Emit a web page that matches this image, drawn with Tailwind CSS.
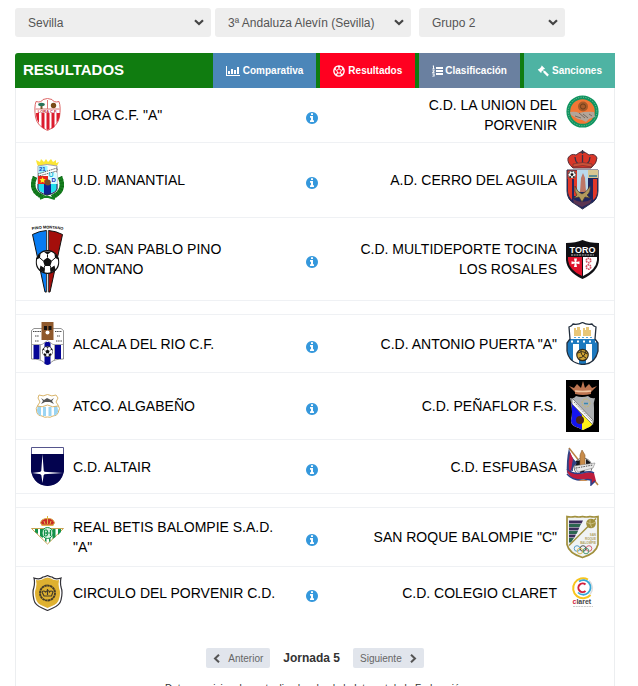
<!DOCTYPE html>
<html lang="es">

<head>
  <meta charset="UTF-8" />
  <meta name="viewport" content="width=device-width, initial-scale=1" />
  <title>Resultados - 3ª Andaluza Alevín</title>
  <script src="https://cdn.jsdelivr.net/npm/@tailwindcss/browser@4"></script>
</head>

<body class="bg-white pt-2 pl-[15px] pr-[23px] font-['Liberation_Sans',Arial,sans-serif] text-black">

  <!-- Shared icons -->
  <svg class="hidden">
    <symbol id="info" viewBox="0 128 1536 1536">
      <path d="M1024 1376v-160q0-14-9-23t-23-9h-96v-512q0-14-9-23t-23-9h-320q-14 0-23 9t-9 23v160q0 14 9 23t23 9h96v320h-96q-14 0-23 9t-9 23v160q0 14 9 23t23 9h448q14 0 23-9t9-23zm-128-896v-160q0-14-9-23t-23-9h-192q-14 0-23 9t-9 23v160q0 14 9 23t23 9h192q14 0 23-9t9-23zm640 416q0 209-103 385.5t-279.5 279.5-385.5 103-385.5-103-279.5-279.5-103-385.5 103-385.5 279.5-279.5 385.5-103 385.5 103 279.5 279.5 103 385.5z" />
    </symbol>
    <symbol id="down" viewBox="0 0 10 7">
      <path d="M1 1.300 5 5 9 1.300" fill="none" stroke="#444" stroke-width="2.200" />
    </symbol>
    <symbol id="ball" viewBox="0 0 24 24">
      <circle cx="12" cy="12" r="11.300" fill="#fff" stroke="#111" stroke-width="1.200" />
      <path d="m12 7.500 4.500 3.200-1.700 5.300H9.200l-1.700-5.300zM8 1.500h8L12 4.500zM.8 9.500 4.500 8 5 3.500 1.800 7zM23.200 9.500 19.500 8 19 3.500l3.200 3.500zM4 20l1-4.500 4.500 3-.5 4zM20 20l-1-4.500-4.500 3 .5 4z" fill="#111" />
      <path d="M12 7.500V4.500M16.500 10.700l3-2.700M14.800 16l1 3M9.200 16l-1 3M7.500 10.700 4.500 8" stroke="#111" />
    </symbol>
  </svg>

  <!-- Filters -->
  <form class="flex text-xs text-[#555]">
    <div class="relative mr-1 w-[196px]">
      <select aria-label="Provincia" class="h-[29px] w-full appearance-none rounded-[3px] bg-[#eee] px-[13px]">
        <option>Sevilla</option>
      </select>
      <svg class="pointer-events-none absolute top-[11px] right-[7px] h-[7px] w-[10px]"><use href="#down" /></svg>
    </div>
    <div class="relative mr-2 w-[196px]">
      <select aria-label="Competición" class="h-[29px] w-full appearance-none rounded-[3px] bg-[#eee] px-[13px]">
        <option>3ª Andaluza Alevín (Sevilla)</option>
      </select>
      <svg class="pointer-events-none absolute top-[11px] right-[7px] h-[7px] w-[10px]"><use href="#down" /></svg>
    </div>
    <div class="relative w-[146px]">
      <select aria-label="Grupo" class="h-[29px] w-full appearance-none rounded-[3px] bg-[#eee] px-[13px]">
        <option>Grupo 2</option>
      </select>
      <svg class="pointer-events-none absolute top-[11px] right-[7px] h-[7px] w-[10px]"><use href="#down" /></svg>
    </div>
  </form>

  <main class="mt-4">
    <!-- Panel header -->
    <header class="flex h-[35px] items-stretch rounded-tl-[3px] bg-[#107c10] text-white">
      <h1 class="flex-1 pl-2 text-[15px] leading-[34px] font-bold">RESULTADOS</h1>
      <nav class="flex gap-1 text-[10px] leading-[37px] font-bold">
        <a href="#" class="flex items-center gap-[3px] bg-[#4b86b9] px-[13px]">
          <svg class="h-[12px] w-[14px]" viewBox="0 0 14 12" fill="#fff"><path d="M0 1h1v9h13v1H0zM2 6h2v3H2zM5 4h2v5H5zM8 5h2v4H8zM11 2h2v7h-2z" /></svg>
          Comparativa
        </a>
        <a href="#" class="flex items-center gap-[3px] bg-[#ff0020] px-[13px]">
          <svg class="h-[12px] w-[12px]" viewBox="0 0 24 24" fill="none" stroke="#fff">
            <circle cx="12" cy="12" r="10.300" stroke-width="2.800" />
            <path d="m12 7.500 4.500 3.200-1.700 5.300H9.200l-1.700-5.300z" stroke-width="2" />
            <path d="M12 7.500V4M16.500 10.700 20 9M14.800 16l2.500 3M9.200 16l-2.500 3M7.500 10.700 4 9" stroke-width="2" />
            <path d="M8 2h8l-4 4zM1.500 10 6 9 5 4.500zM22.500 10 18 9l1-4.500zM5 20l1-4 4 5zM19 20l-1-4-4 5z" fill="#fff" stroke="none" />
          </svg>
          Resultados
        </a>
        <a href="#" class="flex items-center gap-[2px] bg-[#6a80a0] px-[13px]">
          <svg class="h-[12px] w-[11px]" viewBox="0 0 11 12" fill="#fff"><path d="M4 2h7v2H4zM4 5h7v2H4zM4 8h7v2H4zM1 .5h1v3h.7v.7H.4v-.7H1V1.300H.4zM.3 4.800h2.200v1.500L1.300 7.300h1.300V8H.2v-.8l1.300-1.100v-.6H.3zM.3 8.600h2.300v3H.2v-.7h1.500v-.5H.7v-.6h1v-.5H.3z" /></svg>
          Clasificación
        </a>
        <a href="#" class="flex items-center gap-[3px] bg-[#4eb3a3] px-[13px]">
          <svg class="h-[12px] w-[12px]" viewBox="0 0 12 12" fill="#fff"><path d="M4.800.5 8 3.700l-.6.600-.4-.2-1 1 .9.900 1-.2 4 4-1.500 1.700-4-4 .1-1-.9-.9-1.200 1.200.2.500-.6.600L.8 4.700l.6-.6.500.2L4.400 1.700l-.2-.5z" /></svg>
          Sanciones
        </a>
      </nav>
    </header>

    <section class="border-x border-[#eceef0] pb-4">
      <table class="w-full table-fixed border-collapse text-sm leading-5">
        <colgroup>
          <col class="w-[57px]" />
          <col class="w-[35%]" />
          <col class="w-[60px]" />
          <col />
          <col class="w-[57px]" />
        </colgroup>
        <tbody>
          <tr class="border-b border-[#eff1f4]">
            <td class="py-[7px] pl-[15px]">
              <svg class="h-[34px] w-[33px]" viewBox="0 0 33 34">
                <path d="M5 3.500Q10 5 12 1.500q4.500-2 9 0Q23 5 28 3.500 30 9 28.500 19 27 28 16.500 32.500 6 28 4.500 19 3 9 5 3.500z" fill="#fff" stroke="#d66" />
                <path d="M5 15h3v10q-3-4-3-10zM10.500 15h3v16l-3-2zM15.500 15h3v16l-2 1-1-1zM20.500 15h3v14l-3 2zM25.500 15H29q-.5 7-3.500 10z" fill="#dc1c2e" />
                <path d="M16.500 2v9M4.500 11h24" stroke="#d77" />
                <path d="M9.500 7h2v4h-2z" fill="#765b2e" /><ellipse cx="10.500" cy="6.500" rx="3.300" ry="1.700" fill="#26735a" />
                <circle cx="22.500" cy="7.500" r="2.700" fill="#7a4b18" />
                <text x="16.500" y="15" font-size="4" font-weight="bold" text-anchor="middle" fill="#c4283a">LORA C.F.</text>
              </svg>
            </td>
            <td>LORA C.F. "A"</td>
            <td class="pt-[6px]"><a href="#" aria-label="Detalle" class="block"><svg class="mx-auto h-[12px] w-[12px] text-[#3598dc]" fill="currentColor"><use href="#info" /></svg></a></td>
            <td class="pl-3 text-right">C.D. LA UNION DEL PORVENIR</td>
            <td class="py-[7px] pl-[9px]">
              <svg class="h-[40px] w-[33px]" viewBox="0 0 33 40">
                <circle cx="16.500" cy="16.500" r="14.200" fill="#f37735" stroke="#109460" stroke-width="3.800" />
                <circle cx="16.500" cy="16.500" r="14.300" fill="none" stroke="#7dc4a4" stroke-width="1" stroke-dasharray="1 1.500" />
                <circle cx="17" cy="11.500" r="5" fill="#a95a28" /><circle cx="17" cy="11.500" r="2.600" fill="none" stroke="#6e3e1d" />
                <path d="M4 17q6-1 9 1 7-2 15-1l1 5-6 2-3 3-4-2-4-1-7-4z" fill="#b3a599" />
                <path d="m13 18 6 5M17 19l5 4M9 21l6 2M23 19l3 2" stroke="#77695f" />
              </svg>
            </td>
          </tr>
          <tr class="border-b border-[#eff1f4]">
            <td class="py-[7px] pl-[15px]">
              <svg class="h-[42px] w-[33px]" viewBox="0 0 33 42">
                <path d="M4 18q-6 14 8 20M29 18q6 14-8 20" fill="none" stroke="#16801f" stroke-width="4.500" />
                <path d="M4 18q-6 14 8 20M29 18q6 14-8 20" fill="none" stroke="#0b5c14" stroke-width="4.500" stroke-dasharray=".6 2.400" />
                <path d="m9 40 7-3 8 3M10 36l13 4" stroke="#16801f" stroke-width="1.500" fill="none" />
                <path d="M6 5 5 1l4 2 1-3 3 3 2-3 2 3 3-3 2 3 3-2 0 3 3-1-2 4q-10-3-19 0z" fill="#fbe535" />
                <path d="M7 7q9-3 19 0v23q-1 4-10 6-8-2-9-6z" fill="#fff" stroke="#889" stroke-width=".8" />
                <path d="M7.500 7h9v6l-9 4z" fill="#9ff4ff" /><path d="M7 17h10v8H7z" fill="#e6231a" /><path d="M17 14h9v11h-9z" fill="#d8fbff" />
                <path d="M7 25h6v9q-6-2-6-5zM20 25h6v4q0 3-6 5z" fill="#23dfee" /><path d="M13 25h7v10l-4 1-3-1z" fill="#102191" />
                <path d="M7 25v5q1 4 9 6 9-2 10-6v-5" fill="none" stroke="#222a55" />
                <path d="M7 15 26 9v3L8 17z" fill="#fff" stroke="#333" stroke-width=".8" stroke-dasharray="1.500 .8" />
                <path d="m11.500 18 1 2 2.200.2-1.700 1.500.6 2.300-2.100-1.200-2 1.200.5-2.300-1.600-1.500 2.200-.2z" fill="#ffee20" />
                <circle cx="16.800" cy="23.500" r="3" fill="#7a4b26" />
                <text x="8" y="12" font-size="6" font-weight="bold" fill="#1537bd">21</text>
                <text x="17.500" y="18" font-size="7" font-weight="bold" fill="#27b9dd">U</text>
                <text x="20.500" y="23" font-size="6" font-weight="bold" fill="#142dba">D</text>
              </svg>
            </td>
            <td>U.D. MANANTIAL</td>
            <td class="pt-[6px]"><a href="#" aria-label="Detalle" class="block"><svg class="mx-auto h-[12px] w-[12px] text-[#3598dc]" fill="currentColor"><use href="#info" /></svg></a></td>
            <td class="pl-3 text-right">A.D. CERRO DEL AGUILA</td>
            <td class="py-[7px] pl-[9px]">
              <svg class="h-[60px] w-[33px]" viewBox="0 0 33 60">
                <path d="M7 18Q1 13 2 8q3-5 8-3 3-3 6-3 4 0 7 3 6-2 8 3 0 5-6 10z" fill="#d93628" stroke="#57303a" />
                <path d="M16.500 0v4M14.500 2h4M16.500 5v8M9 7q0 4 3 7M24 7q0 4-3 7" stroke="#3b3245" stroke-width="1.300" fill="none" />
                <path d="M7 14q10-3 19 0v3q-9-3-19 0z" fill="#c9523a" stroke="#6c2b2b" stroke-width=".6" />
                <path d="M1 20h31v21q0 9-8 13l-7.500 5L9 54Q1 50 1 41z" fill="#20265f" stroke="#2d304e" />
                <path d="M2 29h4v21q-4-4-4-9zM27 29h4v13q0 5-4 8zM8 29h3v17H8z" fill="#e23728" />
                <path d="M1.500 20.500H11V29H1.500z" fill="#d83a2a" /><svg x="2" y="20.500" width="8" height="8"><use href="#ball" /></svg>
                <path d="M11 20h11v22H11z" fill="#b9d9ec" /><path d="M22 20h10v8H22z" fill="#d8c792" /><path d="M23 25h8v2h-8z" fill="#5b8c93" />
                <path d="m14 42 1-14 2-5 2 5 1 14z" fill="#bd7665" />
                <path d="M9 36q2 6 7 8 5-2 8-8 1 6-3 9l3 3-5-1-3 5-3-5-5 1 3-3q-3-3-2-9z" fill="#b39a5c" stroke="#493e30" stroke-width=".7" />
                <path d="M7 49q9 6 19 0l-2 4-8 4-8-4z" fill="#5b3551" />
              </svg>
            </td>
          </tr>
          <tr class="border-b border-[#eff1f4]">
            <td class="py-[7px] pl-[15px]">
              <svg class="h-[68px] w-[33px]" viewBox="0 0 33 68">
                <path id="arc" d="M1 5q15.500-3 31 0" fill="none" />
                <text font-size="4" font-weight="bold" fill="#000"><textPath href="#arc">PINO MONTANO</textPath></text>
                <path d="M1.500 9.500Q8 6 15.500 5.500V67H14z" fill="#087cf2" stroke="#111" />
                <path d="M31.500 9.500Q25 6 17.500 5.500V67H19z" fill="#a40e0b" stroke="#111" />
                <path d="M16.500 5.500V67" stroke="#ddd" stroke-width="1.500" />
                <svg x="4.500" y="25" width="24" height="24"><use href="#ball" /></svg>
              </svg>
            </td>
            <td>C.D. SAN PABLO PINO MONTANO</td>
            <td class="pt-[6px]"><a href="#" aria-label="Detalle" class="block"><svg class="mx-auto h-[12px] w-[12px] text-[#3598dc]" fill="currentColor"><use href="#info" /></svg></a></td>
            <td class="pl-3 text-right">C.D. MULTIDEPORTE TOCINA LOS ROSALES</td>
            <td class="py-[7px] pl-[9px]">
              <svg class="h-[39px] w-[33px]" viewBox="0 0 33 39">
                <path d="M0 3q10 0 16.500-3Q23 3 33 3v17q-1 12-16.500 19Q1 32 0 20z" fill="#101014" />
                <path d="M2 17h14v19Q3 30 2 20z" fill="#e0112b" /><path d="M17 17h14v3q-1 10-14 16z" fill="#fff" />
                <path d="M8 18.500h3L10.300 22l3.200-.7v3l-3.200-.7.700 3.500H8l.7-3.500-3.200.7v-3l3.200.7z" fill="#fff" />
                <circle cx="22.500" cy="20.500" r="2.200" fill="none" stroke="#d65566" stroke-width="1.700" stroke-dasharray="1.500 .6" />
                <circle cx="22.500" cy="27" r="2.200" fill="none" stroke="#d65566" stroke-width="1.700" stroke-dasharray="1.500 .6" />
                <text x="16.500" y="13" font-size="9" font-weight="bold" text-anchor="middle" fill="#fff">TORO</text>
                <path d="M5 15h23" stroke="#bbb" stroke-dasharray="2 .7" />
              </svg>
            </td>
          </tr>
          <tr class="h-[14px] border-b border-[#eff1f4]"><td colspan="5"></td></tr>
          <tr class="border-b border-[#eff1f4]">
            <td class="py-[7px] pl-[15px]">
              <svg class="h-[43px] w-[33px]" viewBox="0 0 33 43">
                <path d="M.5 8.500 3 6.500h27l2.500 2V37q-9 0-12 3l-4 3-4-3Q9.500 37 .5 37z" fill="#fff" stroke="#777" stroke-width=".8" />
                <path d="M10.500 0h12v18h-12z" fill="#8f592c" /><path d="M13 4h3v4h-3zM17.500 4h3v4h-3z" fill="#17120f" />
                <circle cx="16.500" cy="10.500" r="2" fill="#fff" />
                <path d="M2.500 23h6v14h-6zM24 23h6v14h-6zM13.500 20h6v22l-3 1-3-1z" fill="#050596" />
                <path d="M1 22.500h10l5.500-4 5.500 4h10M9.500 23v15M23.500 23v15" stroke="#aaa" fill="none" />
                <path d="M2 9.500h8M4 14h4M4 19h4M24 9.500h7M26 14h3M25 19h6" stroke="#444" stroke-dasharray="1.200 .5" />
                <svg x="11" y="24" width="11" height="11"><use href="#ball" /></svg>
              </svg>
            </td>
            <td>ALCALA DEL RIO C.F.</td>
            <td class="pt-[6px]"><a href="#" aria-label="Detalle" class="block"><svg class="mx-auto h-[12px] w-[12px] text-[#3598dc]" fill="currentColor"><use href="#info" /></svg></a></td>
            <td class="pl-3 text-right">C.D. ANTONIO PUERTA "A"</td>
            <td class="py-[7px] pl-[9px]">
              <svg class="h-[43px] w-[33px]" viewBox="0 0 33 43">
                <clipPath id="puerta"><path d="M3 5q3-1 4-3 5 1 9.500-1.500Q21 3 26 2q1 2 4 3l-1 12 3 4v8q-3 13-15.500 13.500Q3 41 1 29v-8l3-4z" /></clipPath>
                <g clip-path="url(#puerta)">
                  <path d="M0 0h33v43H0z" fill="#fff" />
                  <path d="M0 17h33v5H0zM0 22h7v21H0zM13 22h7v21h-7zM26 22h7v21h-7z" fill="#1c79bf" />
                  <path d="M5 19.500h25" stroke="#fff" stroke-width="2" stroke-dasharray="2 4" />
                </g>
                <path d="M3 5q3-1 4-3 5 1 9.500-1.500Q21 3 26 2q1 2 4 3l-1 12 3 4v8q-3 13-15.500 13.500Q3 41 1 29v-8l3-4z" fill="none" stroke="#222e3c" stroke-width="1.300" />
                <path d="M8 6h2v2h1V5h3v3h1v6H8zM17 6h2v2h1V5h3v3h2v6h-8z" fill="#e8c778" />
                <path d="M8 15.500h18" stroke="#54a5d5" stroke-dasharray="2 2" />
                <circle cx="16.500" cy="33" r="5.700" fill="#d2a536" stroke="#332b1c" stroke-width="1.200" />
                <path d="M12 31q5-3 9 1M13 36q5 0 7-7M15 28q-1 5 5 8" stroke="#332b1c" fill="none" />
              </svg>
            </td>
          </tr>
          <tr class="border-b border-[#eff1f4]">
            <td class="py-[7px] pl-[15px]">
              <svg class="h-[24px] w-[33px]" viewBox="0 0 33 24">
                <path d="M8 1q4 2 8.500-.5Q21 3 25 1l2 3-2 4 2 3q3 3 0 8-1 3-5 3-3 2-5.500 1-3 1-5.500-1-4 0-5-3-2-5 1-8l2-3-2-4z" fill="#fff" stroke="#d9b56c" />
                <path d="M7 12h3v10q-4-2-4-6zM12 13h3v9h-3zM17.500 13h3v9h-3zM23 12h3q2 5 0 8l-3 2z" fill="#9bd4f2" />
                <path d="m10 4 3 2 3-2 4 2 3-2-2 3 2 3-4-2-5 0-4 2 2-3z" fill="#555" />
                <path d="M6 12q5 2 10.500-1 5 3 10.500 1" fill="none" stroke="#d9b56c" />
              </svg>
            </td>
            <td>ATCO. ALGABEÑO</td>
            <td class="pt-[6px]"><a href="#" aria-label="Detalle" class="block"><svg class="mx-auto h-[12px] w-[12px] text-[#3598dc]" fill="currentColor"><use href="#info" /></svg></a></td>
            <td class="pl-3 text-right">C.D. PEÑAFLOR F.S.</td>
            <td class="py-[7px] pl-[9px]">
              <svg class="h-[52px] w-[33px]" viewBox="0 0 33 52">
                <path d="M0 0h33v52H0z" fill="#000" />
                <path d="m3 6 5 2 3-4 4 4 2-7 2 7 4-4 3 4 5-2-6 6v2q-8 2-16 0v-2z" fill="#bd7551" /><path d="M9 11q7 1 16 0" stroke="#efc5a1" stroke-width="1.300" fill="none" />
                <path d="M4 18q4 1 6-2 6 2 12 0 3 3 7 2-2 5-1 10v13q-1 5-7 7l-4 2-4-2q-8-2-8-7 3-10-1-23z" fill="#aeb1b3" />
                <path d="M5 22 27 43q-2 4-6 5l-4 2-4-2q-8-2-8-7 2-9 0-19z" fill="#fff116" /><path d="m5 22 11 13v15l-3-2q-8-2-8-7 2-9 0-19z" fill="#1515ef" />
                <path d="m6 18 21 22v5L6 24z" fill="#f5f5f5" stroke="#444" stroke-width=".6" /><path d="m8 22 18 19" stroke="#888" stroke-dasharray="1.500 1" />
                <circle cx="20" cy="23" r="4" fill="none" stroke="#c8b86e" stroke-dasharray="2 1" /><path d="M18 23.500h4" stroke="#3587b0" stroke-width="1.500" />
                <circle cx="14" cy="40" r="4" fill="#4b251a" />
              </svg>
            </td>
          </tr>
          <tr class="border-b border-[#eff1f4]">
            <td class="py-[7px] pl-[15px]">
              <svg class="h-[39px] w-[33px]" viewBox="0 0 33 39">
                <path d="M.5.5h32V24Q30 38 16.500 38.500 3 38 .5 24z" fill="#fff" stroke="#55558c" />
                <path d="M0 7h33v17q-3 14-16.500 15Q3 38 0 24z" fill="#03034f" />
                <path d="m11.500 7 1.300 17.700L32 26l-19.200 1.300L11.500 36l-1.300-8.700L1 26l9.200-1.300z" fill="#fff" />
                <circle cx="11.500" cy="26" r="2.300" fill="#fff" />
              </svg>
            </td>
            <td>C.D. ALTAIR</td>
            <td class="pt-[6px]"><a href="#" aria-label="Detalle" class="block"><svg class="mx-auto h-[12px] w-[12px] text-[#3598dc]" fill="currentColor"><use href="#info" /></svg></a></td>
            <td class="pl-3 text-right">C.D. ESFUBASA</td>
            <td class="py-[7px] pl-[9px]">
              <svg class="h-[39px] w-[33px]" viewBox="0 0 33 39">
                <path d="m3 1 29 37" stroke="#b98242" stroke-width="1.500" />
                <circle cx="17" cy="20" r="9" fill="#eee" stroke="#777" /><path d="m10 14 5-1-1 5-5 2zM20 12l4 3 1 5-5-3zM14 21l5 1-1 4-4 0z" fill="#15171d" />
                <path d="m14 8 2-5 3 5v11h-5z" fill="#c88c4a" stroke="#8c5f30" stroke-width=".6" />
                <path d="M3 1q1 8 8 15-5 4-4 8-4-1-6 3Q0 14 3 1z" fill="#2f4385" /><path d="m4 5 3 7-2 11-2 2q-1-10 1-20z" fill="#c51f45" />
                <path d="m8 19 21-3-2 5-15 4z" fill="#e9e9e9" stroke="#777" stroke-width=".5" /><path d="m10 21 17-3" stroke="#555" stroke-dasharray="1.500 1" />
                <path d="M1 22q7 6 17 4 8-2 10 0l2 8-5 4 0-5q-8-2-14 0Q1 30 1 22z" fill="#bd1d3c" />
                <path d="M1 22q7 7 19 3 5-1 8 1M1 27q6 7 17 6 4-1 7 0l0 5 4-4" stroke="#2c3f88" stroke-width="1.500" fill="none" />
                <path d="M12 34q6-3 10 0z" fill="#c98f55" />
              </svg>
            </td>
          </tr>
          <tr class="h-[14px] border-b border-[#eff1f4]"><td colspan="5"></td></tr>
          <tr class="border-b border-[#eff1f4]">
            <td class="py-[7px] pl-[15px]">
              <svg class="h-[43px] w-[33px]" viewBox="0 0 33 43">
                <path d="M.5 12.500h32L16.500 28z" fill="#fff" stroke="#c7a453" />
                <path d="M4 13h3v5l-3-2zM9 13h3v9l-3-2zM14 13h1.500v13L14 25zM18 13h1.500v12L18 26zM21.500 13h3v8l-3 2zM27 13h3v3l-3 3z" fill="#149249" />
                <circle cx="16.500" cy="17" r="5.500" fill="#d8f0df" stroke="#149249" />
                <path d="M13.500 14v6M13.500 14h2q2 1.500 0 3h-2M15 17q3 1.500 0 3h-1.500M19.500 14v6M16 17h3.500" fill="none" stroke="#149249" stroke-width="1.200" />
                <path d="M11 9Q8 7 11 4q3-2 5.500-1.500Q20 2 22 4q3 3 0 5z" fill="#c92b28" stroke="#d9aa48" />
                <path d="M16.500 0v8M13 5l1 3M20 5l-1 3M10.500 9.500h12" stroke="#e1b14a" />
              </svg>
            </td>
            <td>REAL BETIS BALOMPIE S.A.D. "A"</td>
            <td class="pt-[6px]"><a href="#" aria-label="Detalle" class="block"><svg class="mx-auto h-[12px] w-[12px] text-[#3598dc]" fill="currentColor"><use href="#info" /></svg></a></td>
            <td class="pl-3 text-right">SAN ROQUE BALOMPIE "C"</td>
            <td class="py-[7px] pl-[9px]">
              <svg class="h-[44px] w-[33px]" viewBox="0 0 33 43">
                <path d="M1 1q4 1 8 0 4 1 7.500 0 4 1 7.500 0 4 1 8 0v28q-2 9-15.500 13Q3 38 1 29z" fill="#f0f3f5" stroke="#a1903c" stroke-width="1.700" />
                <path d="M3 5h14l-1.500 3H3zM3 12h10.500L12 15H3zM3 19h7l-1.500 3H3z" fill="#3a2b5b" /><path d="M3 8.500h12L13.500 11.500H3zM3 15.500h9L10.500 18.500H3zM3 22.500h5L5 27H3z" fill="#2b6650" />
                <path d="M3 30 30 3" stroke="#a1903c" stroke-width="1.500" />
                <circle cx="25" cy="8" r="4.800" fill="#a1903c" /><path d="M21 7q4 3 8 0M24 4q-1 5 2 8" stroke="#d9cf9b" stroke-width=".7" fill="none" />
                <g font-size="3" font-weight="bold" text-anchor="end" fill="#b0a260"><text x="30" y="20">SAN</text><text x="30" y="24">ROQUE</text><text x="30" y="28">BALOMPIE</text></g>
                <g fill="none" stroke-width=".9"><circle cx="11" cy="33" r="2.800" stroke="#4a94c4" /><circle cx="17" cy="33" r="2.800" stroke="#444" /><circle cx="23" cy="33" r="2.800" stroke="#d15462" /><circle cx="14" cy="35.500" r="2.800" stroke="#d9b94a" /><circle cx="20" cy="35.500" r="2.800" stroke="#43946a" /></g>
              </svg>
            </td>
          </tr>
          <tr>
            <td class="py-[7px] pl-[15px]">
              <svg class="h-[36px] w-[33px]" viewBox="0 0 33 36">
                <path d="M3 3q6 2 9-1 2 0 4.500-1.500Q19 2 21 2q3 3 9 1-1 4 0 9 2 5 0 13-1 5-8 8l-5.500 2.500L11 33q-7-3-8-8-2-8 0-13 1-5 0-9z" fill="#fff" stroke="#333238" stroke-width="1.200" />
                <path d="M5 5q5 1 8-1.500l3.500-1 3.500 1Q23 6 28 5q-1 4 0 8 2 5 0 11-1 5-7 7l-4.500 2L12 31q-6-2-7-7-2-6 0-11 1-4 0-8z" fill="#dfb131" />
                <circle cx="16.500" cy="18" r="7.500" fill="none" stroke="#443b29" stroke-width="1.900" stroke-dasharray="2.500 .4" />
                <path d="M13 21h7.500l1.500-4q-2-2-3.500 0-1-3-4 0-2-2-3.500 0zM16.500 14v6" fill="none" stroke="#443b29" stroke-width="1.200" />
              </svg>
            </td>
            <td>CIRCULO DEL PORVENIR C.D.</td>
            <td class="pt-[6px]"><a href="#" aria-label="Detalle" class="block"><svg class="mx-auto h-[12px] w-[12px] text-[#3598dc]" fill="currentColor"><use href="#info" /></svg></a></td>
            <td class="pl-3 text-right">C.D. COLEGIO CLARET</td>
            <td class="py-[7px] pl-[9px]">
              <svg class="h-[38px] w-[33px]" viewBox="0 0 33 38">
                <g fill="none">
                  <path d="M22 5.500a10 10 0 1 0 2.500 15.500" stroke="#f7c51e" stroke-width="2" />
                  <path d="M23 6.500a10 10 0 0 1 1 14" stroke="#ddd" stroke-width="1.500" />
                  <path d="M13 7.500a7.300 7.300 0 1 1-1 11" stroke="#35a7d7" stroke-width="1.800" />
                  <path d="M19.500 10.500a4.300 4.300 0 1 0 0 6.500" stroke="#d3213d" stroke-width="2" />
                </g>
                <text x="6.500" y="30" font-size="7" font-weight="bold" fill="#d3213d">c<tspan fill="#444">laret</tspan></text>
                <path d="M7 32.500h20" stroke="#ccc" stroke-dasharray="2 .7" />
              </svg>
            </td>
          </tr>
        </tbody>
      </table>

      <!-- Matchday pager -->
      <div class="mt-[29px] flex items-center justify-center gap-[13px] text-[#333]">
        <button type="button" class="flex h-5 items-center gap-2 rounded-[2px] bg-[#e1e5ec] px-[7px] text-[10px] text-[#666]">
          <svg class="h-[9px] w-[7px]" viewBox="0 0 7 9" fill="none" stroke="#555" stroke-width="2"><path d="M6 .7 2 4.500 6 8.300" /></svg>
          Anterior
        </button>
        <span class="text-xs leading-[18px] font-bold">Jornada 5</span>
        <button type="button" class="flex h-5 items-center gap-2 rounded-[2px] bg-[#e1e5ec] px-[7px] text-[10px] text-[#666]">
          Siguiente
          <svg class="h-[9px] w-[7px]" viewBox="0 0 7 9" fill="none" stroke="#555" stroke-width="2"><path d="M1 .7 5 4.500 1 8.300" /></svg>
        </button>
      </div>
      <p class="mt-[13px] text-center text-[10px] leading-[15px] text-[#333]">Datos provisionales actualizados desde la Intranet de la Federación</p>
    </section>
  </main>

</body>

</html>
